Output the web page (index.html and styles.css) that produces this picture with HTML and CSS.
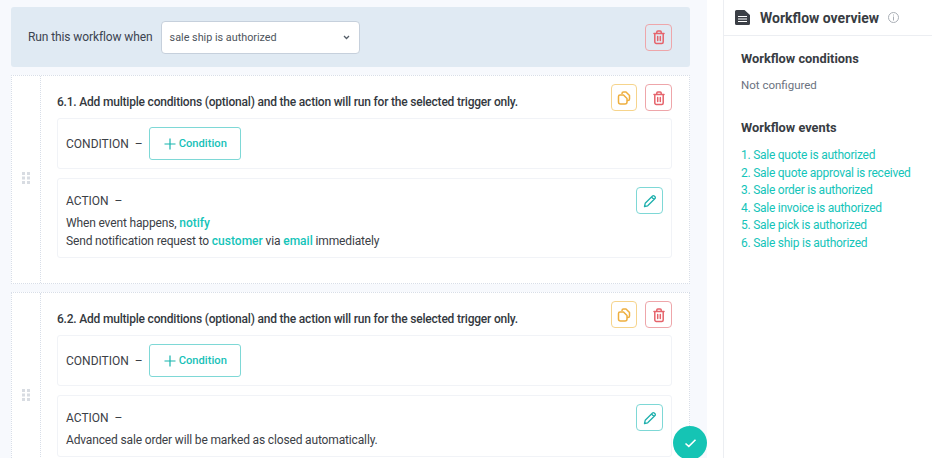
FILE: index.html
```html
<!DOCTYPE html>
<html lang="en">
<head>
<meta charset="utf-8">
<title>Workflow</title>
<link rel="stylesheet" href="styles.css">
</head>
<body>
<svg class="defs" width="0" height="0" aria-hidden="true">
  <symbol id="trash" viewBox="0 0 16 16"><path d="M3 4.500h10M5.800 4.300V3a1 1 0 0 1 1-1h2.400a1 1 0 0 1 1 1v1.300M3.800 4.500v8.500a1.500 1.500 0 0 0 1.500 1.500h5.400a1.500 1.500 0 0 0 1.500-1.500V4.500M6.700 7.500v4M9.300 7.500v4" fill="none" stroke="currentColor" stroke-width="1.500" stroke-linejoin="round" stroke-linecap="round"/></symbol>
  <symbol id="copy" viewBox="0 0 16 16"><path d="M6 4V3.500A1.500 1.500 0 0 1 7.500 2H10l3.500 3.500V9a1.500 1.500 0 0 1-1.500 1.500h-1" fill="none" stroke="currentColor" stroke-width="1.500" stroke-linejoin="round"/><path d="M4 5h3.500L11 8.500V12a2 2 0 0 1-2 2H4.500A2 2 0 0 1 2.500 12V6.500A1.500 1.500 0 0 1 4 5z" fill="none" stroke="currentColor" stroke-width="1.500" stroke-linejoin="round"/></symbol>
  <symbol id="pencil" viewBox="0 0 16 16"><path d="M2.500 13.500l.7-3.200 7.300-7.300a1.200 1.200 0 0 1 1.700 0l.8.8a1.200 1.200 0 0 1 0 1.700l-7.300 7.300zM9.500 4l2.500 2.500" fill="none" stroke="currentColor" stroke-width="1.300" stroke-linejoin="round"/></symbol>
  <symbol id="plus" viewBox="0 0 12 12"><path d="M6 .5v11M.5 6h11" fill="none" stroke="currentColor" stroke-width="1.200"/></symbol>
  <symbol id="grip" viewBox="0 0 8 12"><path d="M0 0h3v3H0zM5 0h3v3H5zM0 4.500h3v3H0zM5 4.500h3v3H5zM0 9h3v3H0zM5 9h3v3H5z" fill="currentColor"/></symbol>
</svg>
<div class="app">
  <main class="main">
    <section class="trigger">
      <span class="trigger-label">Run this workflow when</span>
      <div class="select">
        <span>sale ship is authorized</span>
        <svg class="chev" width="7" height="5" viewBox="0 0 7 5"><path d="M1 1l2.500 2.500L6 1" fill="none" stroke="#555e68" stroke-width="1.300"/></svg>
      </div>
      <button class="icon-btn danger trigger-del"><svg width="16" height="16"><use href="#trash"/></svg></button>
    </section>

    <section class="card">
      <div class="gutter"><svg class="grip" width="8" height="12"><use href="#grip"/></svg></div>
      <div class="body">
        <div class="head">
          <h2>6.1. Add multiple conditions (optional) and the action will run for the selected trigger only.</h2>
          <div class="head-actions">
            <button class="icon-btn warn"><svg width="16" height="16"><use href="#copy"/></svg></button>
            <button class="icon-btn danger"><svg width="16" height="16"><use href="#trash"/></svg></button>
          </div>
        </div>
        <div class="box cond">
          <span class="tag">CONDITION &nbsp;–</span>
          <button class="add"><svg width="12" height="12"><use href="#plus"/></svg>Condition</button>
        </div>
        <div class="box action">
          <div class="action-top"><span class="tag">ACTION &nbsp;–</span><button class="icon-btn teal"><svg width="16" height="16"><use href="#pencil"/></svg></button></div>
          <p>When event happens, <b>notify</b><br>Send notification request to <b>customer</b> via <b>email</b> immediately</p>
        </div>
      </div>
    </section>

    <section class="card">
      <div class="gutter"><svg class="grip" width="8" height="12"><use href="#grip"/></svg></div>
      <div class="body">
        <div class="head">
          <h2>6.2. Add multiple conditions (optional) and the action will run for the selected trigger only.</h2>
          <div class="head-actions">
            <button class="icon-btn warn"><svg width="16" height="16"><use href="#copy"/></svg></button>
            <button class="icon-btn danger"><svg width="16" height="16"><use href="#trash"/></svg></button>
          </div>
        </div>
        <div class="box cond">
          <span class="tag">CONDITION &nbsp;–</span>
          <button class="add"><svg width="12" height="12"><use href="#plus"/></svg>Condition</button>
        </div>
        <div class="box action short">
          <div class="action-top"><span class="tag">ACTION &nbsp;–</span><button class="icon-btn teal"><svg width="16" height="16"><use href="#pencil"/></svg></button></div>
          <p>Advanced sale order will be marked as closed automatically.</p>
        </div>
      </div>
    </section>
  </main>

  <aside class="side">
    <header class="side-head">
      <svg width="15" height="15" viewBox="0 0 15 15"><path d="M1.500 0h8L15 5v8.500a1.500 1.500 0 0 1-1.500 1.500h-12A1.500 1.500 0 0 1 0 13.500v-12A1.500 1.500 0 0 1 1.500 0z" fill="#3b3f46"/><path d="M3 6.500h9M3 9h9M3 11.500h9" stroke="#fff" stroke-width="1.200"/></svg>
      <h1>Workflow overview</h1>
      <svg width="11" height="11" viewBox="0 0 11 11"><circle cx="5.500" cy="5.500" r="5" fill="none" stroke="#a9aeb5"/><path d="M5.500 2.500v1M5.500 4.500v4" stroke="#a9aeb5"/></svg>
    </header>
    <div class="side-body">
      <h3>Workflow conditions</h3>
      <p class="muted">Not configured</p>
      <h3 class="events">Workflow events</h3>
      <ol>
        <li>1. Sale quote is authorized</li>
        <li>2. Sale quote approval is received</li>
        <li>3. Sale order is authorized</li>
        <li>4. Sale invoice is authorized</li>
        <li>5. Sale pick is authorized</li>
        <li>6. Sale ship is authorized</li>
      </ol>
    </div>
  </aside>
</div>
<button class="fab" aria-label="Confirm"><svg width="13" height="10" viewBox="0 0 13 10"><path d="M1.500 5.500L4.800 8.300 11.500 1.800" fill="none" stroke="#fff" stroke-width="1.600"/></svg></button>
</body>
</html>
```
FILE: styles.css
```css
* { box-sizing: border-box; }
html, body { margin: 0; height: 100%; overflow: hidden; }
body { font-family: Roboto, "Liberation Sans", sans-serif; font-size: 12px; color: #3b4046; background: #fff; }
.defs { position: absolute; }
button { font: inherit; background: #fff; padding: 0; cursor: pointer; }
.app { display: flex; height: 458px; overflow: hidden; }
.main { width: 707px; background: #f7f9fd; padding: 7px 17px 0 11px; flex: none; display: flex; flex-direction: column; gap: 8px; }
.trigger { flex: none; height: 60px; background: #e0eaf3; border-radius: 3px; display: flex; align-items: center; padding: 0 18px 0 17px; }
.trigger-label { font-size: 12px; letter-spacing: -0.1px; color: #3b4350; margin-right: 8px; }
.select { width: 199px; height: 33px; background: #fff; border: 1px solid #c6d0dc; border-radius: 4px; display: flex; align-items: center; justify-content: space-between; padding: 0 9px 0 8px; color: #4d545c; font-size: 10.800px; }
.chev { flex: none; }
.trigger-del { margin-left: auto; }
.icon-btn { width: 27px; height: 27px; border-radius: 4px; display: flex; align-items: center; justify-content: center; background: #fff; border: 1px solid; flex: none; }
.danger { border-color: #eea6aa; color: #e5636b; }
.trigger .danger { background: transparent; }
.warn { border-color: #f6d48c; color: #eeaf3f; width: 26px; }
.teal { border-color: #7ed8d6; color: #1fb0ad; }
.card { flex: none; background: #fff; border: 1px dotted #d8dee8; display: flex; height: 209px; }
.card:last-of-type { height: 300px; }
.gutter { width: 29px; border-right: 1px dotted #d8dee8; flex: none; display: flex; align-items: flex-start; justify-content: center; padding-top: 96px; }
.grip { color: #d8dce2; }
.body { flex: 1; padding: 8px 17px 0 16px; min-width: 0; }
.head { display: flex; justify-content: space-between; align-items: center; height: 27px; margin-bottom: 7px; }
h2 { margin: 8px 0 0; font-size: 12px; font-weight: 500; letter-spacing: -0.2px; color: #33383e; white-space: nowrap; }
.head-actions { display: flex; gap: 8px; }
.box { background: #fff; border: 1px solid #f1f3f7; border-radius: 3px; padding: 0 8px; }
.cond { height: 51px; display: flex; align-items: center; gap: 6px; margin-bottom: 9px; }
.tag { color: #3b4046; font-size: 12px; }
.add { width: 92px; height: 33px; border: 1px solid #7ed8d6; border-radius: 3px; color: #17c1b8; font-size: 11.200px; font-weight: 500; display: flex; align-items: center; justify-content: flex-start; gap: 3px; padding-left: 14px; }
.add svg { color: #17b5ae; }
.action { height: 80px; }
.action.short { height: 62px; }
.action-top { display: flex; justify-content: space-between; align-items: center; padding-top: 8px; height: 35px; }
.action p { margin: 0; line-height: 18px; font-size: 12px; letter-spacing: -0.15px; color: #3b4046; }
.action b { font-weight: 500; letter-spacing: 0; color: #14c4b9; }
.side { flex: 1; margin-left: 16px; background: #fff; border-left: 1px solid #eceef2; }
.side-head { height: 36px; border-bottom: 1px solid #eceef2; display: flex; align-items: center; padding-left: 11px; }
.side-head h1 { margin: 0 9px 0 10px; font-size: 14px; font-weight: 700; color: #383c42; }
.side-body { padding: 15px 17px; }
h3 { margin: 0; font-size: 12.800px; font-weight: 700; color: #383c42; line-height: 16px; }
.muted { margin: 10px 0 0; color: #6b7280; font-size: 11.500px; line-height: 16px; }
.events { margin-top: 27px; }
ol { list-style: none; margin: 11px 0 0; padding: 0; color: #14c4b9; font-size: 12px; letter-spacing: -0.25px; line-height: 17.500px; white-space: nowrap; }
.fab { position: fixed; left: 673px; top: 426px; width: 34px; height: 34px; border-radius: 50%; border: 0; background: #15c4b4; display: flex; align-items: center; justify-content: center; }
```
